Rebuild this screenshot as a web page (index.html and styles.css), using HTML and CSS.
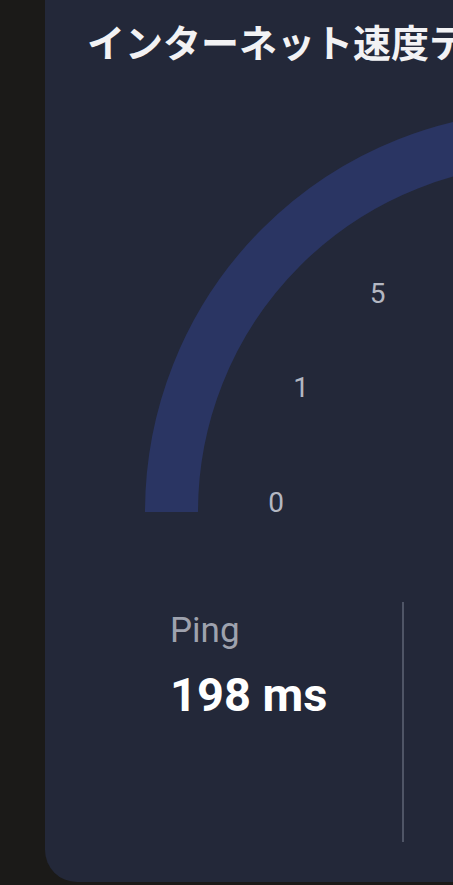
FILE: index.html
```html
<!DOCTYPE html>
<html lang="ja">
<head>
<meta charset="utf-8">
<title>インターネット速度テスト</title>
<link rel="stylesheet" href="styles.css">
</head>
<body>
<main class="card">
  <h1 class="title">インターネット速度テスト</h1>
  <svg class="gauge" viewBox="0 0 1002 420" width="1002" height="420">
    <path class="gauge-track" d="M126.5 412 A374.5 374.5 0 0 1 875.5 412"/>
    <text class="gauge-label" x="231" y="412">0</text>
    <text class="gauge-label" x="256" y="297">1</text>
    <text class="gauge-label" x="332.5" y="203">5</text>
  </svg>
  <section class="stats">
    <div class="stat stat-ping">
      <div class="stat-label">Ping</div>
      <div class="stat-value">198 ms</div>
    </div>
    <div class="stat stat-download"></div>
  </section>
</main>
</body>
</html>
```
FILE: styles.css
```css
html, body {
  margin: 0;
  padding: 0;
}
body {
  background: #1b1a18;
  width: 453px;
  height: 885px;
  overflow: hidden;
  font-family: Roboto, "Noto Sans", "Noto Sans CJK JP", sans-serif;
}
.card {
  margin-left: 45px;
  width: 1002px;
  height: 882px;
  box-sizing: border-box;
  padding-top: 19px;
  background: #232839;
  border-radius: 0 0 32px 32px;
}
.title {
  margin: 0;
  padding-left: 42px;
  font-family: "Noto Sans CJK JP", "Noto Sans", sans-serif;
  font-weight: 700;
  font-size: 38px;
  line-height: 43px;
  color: #f2f2f4;
  white-space: nowrap;
}
.gauge {
  display: block;
  margin-top: 38px;
}
.gauge-track {
  fill: none;
  stroke: #2a3563;
  stroke-width: 53;
}
.gauge-label {
  font-family: Roboto, sans-serif;
  font-size: 28px;
  fill: #b3b7c2;
  text-anchor: middle;
}
.stats {
  display: grid;
  grid-template-columns: 359px 1fr;
  margin-top: 82px;
  height: 240px;
}
.stat-ping {
  box-sizing: border-box;
  border-right: 2px solid #4f5566;
  padding: 8px 0 0 125px;
}
.stat-label {
  font-size: 35px;
  line-height: 1.2;
  color: #9ea2ae;
}
.stat-value {
  margin-top: 15px;
  font-size: 47px;
  font-weight: 700;
  line-height: 1.2;
  color: #ffffff;
}
```
